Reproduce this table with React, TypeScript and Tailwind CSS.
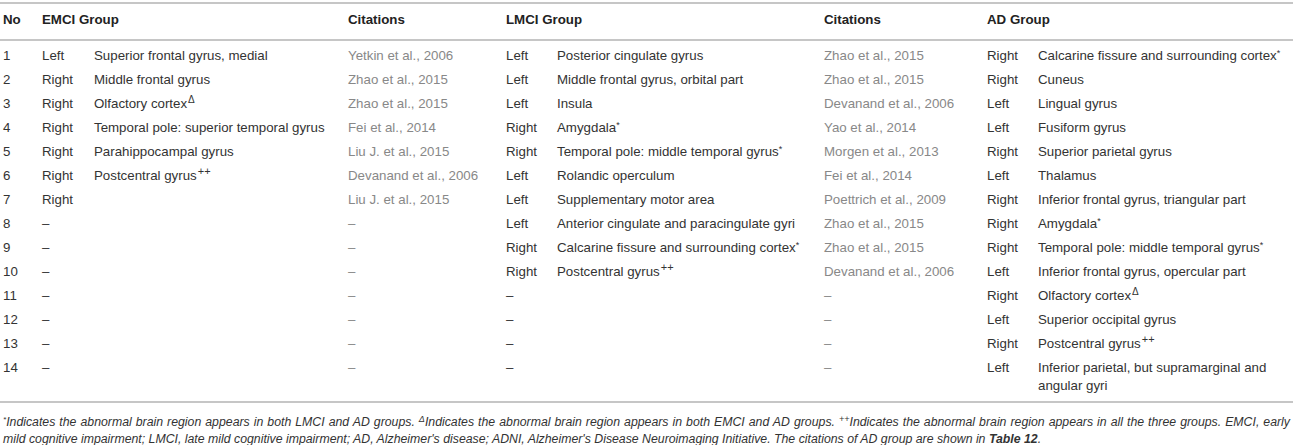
import React from "react";

type Row = {
  no: number;
  eSide: string;
  eRegion: React.ReactNode;
  eCite: string;
  lSide: string;
  lRegion: React.ReactNode;
  lCite: string;
  aSide: string;
  aRegion: React.ReactNode;
};

const Delta = () => <sup className="text-[10px] ml-[1px]">Δ</sup>;
const PlusPlus = () => <sup className="text-[11px] ml-[1px]">++</sup>;
const Star = () => <sup className="text-[9px]">*</sup>;

const rows: Row[] = [
  { no: 1, eSide: "Left", eRegion: "Superior frontal gyrus, medial", eCite: "Yetkin et al., 2006", lSide: "Left", lRegion: "Posterior cingulate gyrus", lCite: "Zhao et al., 2015", aSide: "Right", aRegion: <>Calcarine fissure and surrounding cortex<Star /></> },
  { no: 2, eSide: "Right", eRegion: "Middle frontal gyrus", eCite: "Zhao et al., 2015", lSide: "Left", lRegion: "Middle frontal gyrus, orbital part", lCite: "Zhao et al., 2015", aSide: "Right", aRegion: "Cuneus" },
  { no: 3, eSide: "Right", eRegion: <>Olfactory cortex<Delta /></>, eCite: "Zhao et al., 2015", lSide: "Left", lRegion: "Insula", lCite: "Devanand et al., 2006", aSide: "Left", aRegion: "Lingual gyrus" },
  { no: 4, eSide: "Right", eRegion: "Temporal pole: superior temporal gyrus", eCite: "Fei et al., 2014", lSide: "Right", lRegion: <>Amygdala<Star /></>, lCite: "Yao et al., 2014", aSide: "Left", aRegion: "Fusiform gyrus" },
  { no: 5, eSide: "Right", eRegion: "Parahippocampal gyrus", eCite: "Liu J. et al., 2015", lSide: "Right", lRegion: <>Temporal pole: middle temporal gyrus<Star /></>, lCite: "Morgen et al., 2013", aSide: "Right", aRegion: "Superior parietal gyrus" },
  { no: 6, eSide: "Right", eRegion: <>Postcentral gyrus<PlusPlus /></>, eCite: "Devanand et al., 2006", lSide: "Left", lRegion: "Rolandic operculum", lCite: "Fei et al., 2014", aSide: "Left", aRegion: "Thalamus" },
  { no: 7, eSide: "Right", eRegion: "", eCite: "Liu J. et al., 2015", lSide: "Left", lRegion: "Supplementary motor area", lCite: "Poettrich et al., 2009", aSide: "Right", aRegion: "Inferior frontal gyrus, triangular part" },
  { no: 8, eSide: "–", eRegion: "", eCite: "–", lSide: "Left", lRegion: "Anterior cingulate and paracingulate gyri", lCite: "Zhao et al., 2015", aSide: "Right", aRegion: <>Amygdala<Star /></> },
  { no: 9, eSide: "–", eRegion: "", eCite: "–", lSide: "Right", lRegion: <>Calcarine fissure and surrounding cortex<Star /></>, lCite: "Zhao et al., 2015", aSide: "Right", aRegion: <>Temporal pole: middle temporal gyrus<Star /></> },
  { no: 10, eSide: "–", eRegion: "", eCite: "–", lSide: "Right", lRegion: <>Postcentral gyrus<PlusPlus /></>, lCite: "Devanand et al., 2006", aSide: "Left", aRegion: "Inferior frontal gyrus, opercular part" },
  { no: 11, eSide: "–", eRegion: "", eCite: "–", lSide: "–", lRegion: "", lCite: "–", aSide: "Right", aRegion: <>Olfactory cortex<Delta /></> },
  { no: 12, eSide: "–", eRegion: "", eCite: "–", lSide: "–", lRegion: "", lCite: "–", aSide: "Left", aRegion: "Superior occipital gyrus" },
  { no: 13, eSide: "–", eRegion: "", eCite: "–", lSide: "–", lRegion: "", lCite: "–", aSide: "Right", aRegion: <>Postcentral gyrus<PlusPlus /></> },
  { no: 14, eSide: "–", eRegion: "", eCite: "–", lSide: "–", lRegion: "", lCite: "–", aSide: "Left", aRegion: "Inferior parietal, but supramarginal and angular gyri" },
];

const grid =
  "grid grid-cols-[39px_52px_254px_158px_51px_267px_163px_51px_258px]";

export default function App() {
  return (
    <div
      className="w-[1296px] h-[445px] bg-white overflow-hidden pt-[2px] text-[#333] text-[13.3px]"
      style={{ fontFamily: '"Liberation Sans", Arial, sans-serif' }}
    >
      <div className="w-[1293px]">
        <div className="h-[2px] bg-[#c6c6c6]" />
        <div className={`${grid} font-bold text-[#222] leading-[18px] pt-[7px] pb-[10px]`}>
          <div className="pl-[3px]">No</div>
          <div className="col-span-2 pl-[3px]">EMCI Group</div>
          <div className="pl-[3px]">Citations</div>
          <div className="col-span-2 pl-[3px]">LMCI Group</div>
          <div className="pl-[3px]">Citations</div>
          <div className="col-span-2 pl-[3px]">AD Group</div>
        </div>
        <div className="h-[2px] bg-[#c6c6c6]" />
        <div className="pt-[3px] pb-[3px] leading-[18px]">
          {rows.map((r) => (
            <div key={r.no} className={grid}>
              <div className="pl-[3px] py-[3px]">{r.no}</div>
              <div className="pl-[3px] py-[3px]">{r.eSide}</div>
              <div className="pl-[3px] py-[3px]">{r.eRegion}</div>
              <div className="pl-[3px] py-[3px] text-[#888]">{r.eCite}</div>
              <div className="pl-[3px] py-[3px]">{r.lSide}</div>
              <div className="pl-[3px] py-[3px]">{r.lRegion}</div>
              <div className="pl-[3px] py-[3px] text-[#888]">{r.lCite}</div>
              <div className="pl-[3px] py-[3px]">{r.aSide}</div>
              <div className="pl-[3px] py-[3px] pr-[2px]">{r.aRegion}</div>
            </div>
          ))}
        </div>
        <div className="h-[2px] bg-[#c6c6c6]" />
        <div className="pt-[11px] pl-[3px] w-[1290px] italic text-[12.3px] leading-[17px] text-[#333]">
          <div className="text-justify [text-align-last:justify]">
            <sup className="text-[8px]">*</sup>Indicates the abnormal brain region appears in both LMCI and AD groups.{" "}
            <sup className="text-[9px]">Δ</sup>Indicates the abnormal brain region appears in both EMCI and AD groups.{" "}
            <sup className="text-[9px]">++</sup>Indicates the abnormal brain region appears in all the three groups. EMCI, early
          </div>
          <div className="whitespace-nowrap">
            mild cognitive impairment; LMCI, late mild cognitive impairment; AD, Alzheimer's disease; ADNI, Alzheimer's Disease Neuroimaging Initiative. The citations of AD group are shown in{" "}
            <b>Table 12</b>.
          </div>
        </div>
      </div>
    </div>
  );
}
